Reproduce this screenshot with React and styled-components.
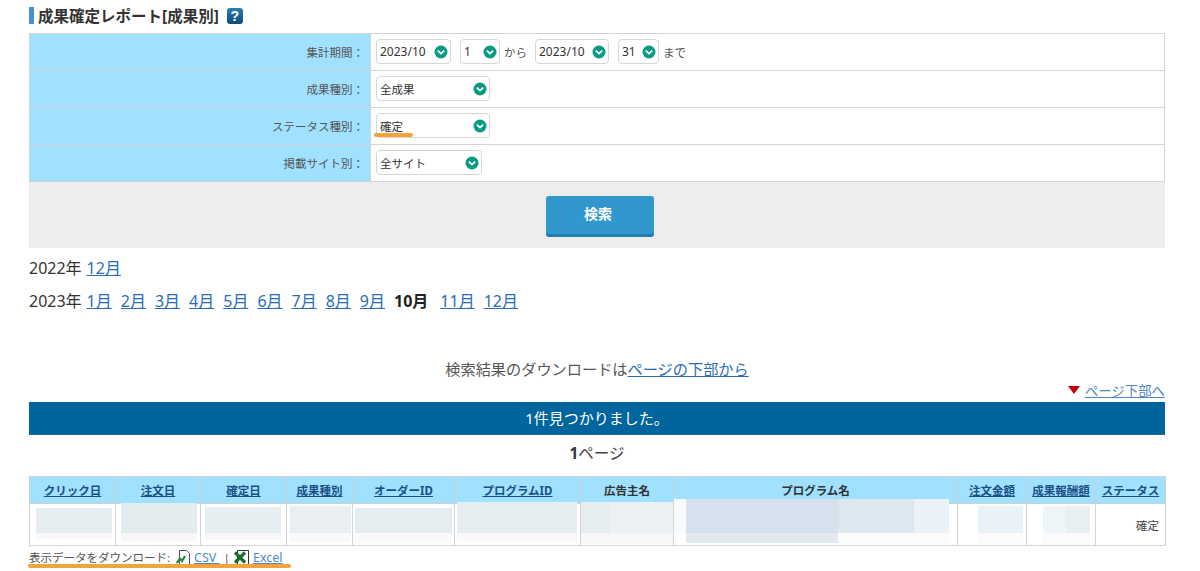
import React from "react";
import styled, { createGlobalStyle } from "styled-components";

const Global = createGlobalStyle`
  html, body { margin: 0; padding: 0; background: #fff; }
  body { font-family: "Noto Sans", "Noto Sans CJK JP", sans-serif; color: #333; overflow: hidden; }
`;

const Page = styled.div`
  width: 1136px;
  height: 571px;
  margin-left: 29px;
`;

const Title = styled.h1`
  display: flex;
  align-items: center;
  height: 17px;
  margin: 0;
  padding: 7px 0 0 9px;
  position: relative;
  font-size: 15.5px;
  font-weight: 700;
  color: #333;
  &::before {
    content: "";
    position: absolute;
    left: 0;
    top: 7px;
    width: 4.5px;
    height: 17px;
    background: #4a90d0;
  }
`;

const Help = styled.span`
  display: inline-flex;
  align-items: center;
  justify-content: center;
  width: 16px;
  height: 16px;
  margin-left: 8px;
  border-radius: 3px;
  background: linear-gradient(#2b80b4, #0b4a78);
  color: #fff;
  font-family: "Liberation Sans", sans-serif;
  font-size: 14px;
  font-weight: 700;
`;

const Form = styled.div`
  margin-top: 9px;
  border: 1px solid #d4d4d4;
  border-bottom: 0;
  display: flex;
  flex-direction: column;
`;

const FormRow = styled.div`
  display: flex;
  height: 36px;
  border-bottom: 1px solid #d4d4d4;
`;

const FormLabel = styled.div`
  box-sizing: border-box;
  width: 341px;
  background: #a0e1ff;
  border-right: 1px solid #d4d4d4;
  display: flex;
  align-items: center;
  justify-content: flex-end;
  padding-right: 6px;
  font-size: 11.5px;
  color: #555;
`;

const FormValue = styled.div`
  flex: 1;
  display: flex;
  align-items: center;
  padding: 0 0 1px 5px;
`;

const Select = styled.div`
  position: relative;
  display: flex;
  align-items: center;
  justify-content: space-between;
  box-sizing: border-box;
  width: ${(p) => p.$w}px;
  height: 25px;
  margin-right: ${(p) => p.$mr || 0}px;
  padding: 0 2px 0 3px;
  border: 1px solid #d6d6d6;
  border-radius: 4px;
  background: #fff;
  color: #333;
  font-size: ${(p) => p.$fs || 12}px;
`;

const Mark = styled.span`
  position: absolute;
  left: -3px;
  bottom: 0;
  width: 39px;
  height: 4px;
  border-radius: 2px;
  background: #f3a33c;
`;

const Unit = styled.span`
  margin-right: ${(p) => p.$mr || 0}px;
  font-size: 11.5px;
  color: #555;
`;

const Chevron = () => (
  <svg width="14" height="14" viewBox="0 0 14 14" style={{ flex: "none" }}>
    <circle cx="7" cy="7" r="6.5" fill="#0a9a82" />
    <path d="M3.8 5.6 7 8.6l3.2-3" fill="none" stroke="#fff" strokeWidth="1.7" />
  </svg>
);

const SearchBar = styled.div`
  height: 66px;
  background: #ededed;
  display: flex;
  align-items: center;
  justify-content: center;
`;

const SearchButton = styled.button`
  width: 108px;
  height: 41px;
  margin: 3px 0 0 6px;
  border: 0;
  border-bottom: 3px solid #1f7fb0;
  border-radius: 3px;
  background: #3198cd;
  color: #fff;
  font-family: inherit;
  font-size: 14px;
  font-weight: 700;
  padding: 0 4px 4px 0;
`;

const YearLine = styled.div`
  display: flex;
  align-items: center;
  height: 24px;
  margin-top: ${(p) => p.$mt}px;
  font-size: 16px;
  color: #333;
`;

const MonthLink = styled.a`
  margin-left: 5px;
  margin-right: 4px;
  color: #2a6db5;
  text-decoration: underline;
`;

const CurrentMonth = styled.b`
  margin-left: 5px;
  margin-right: 7px;
  color: #222;
`;

const Notice = styled.div`
  margin-top: 45px;
  height: 24px;
  text-align: center;
  font-size: 15.2px;
  color: #555;
  line-height: 24px;
  a { color: #2a6db5; text-decoration: underline; }
`;

const ToBottom = styled.div`
  display: flex;
  align-items: center;
  justify-content: flex-end;
  height: 20px;
  margin: -1px 0 2px;
  font-size: 13.4px;
  a { color: #4f86c6; text-decoration: underline; margin-left: 5px; }
`;

const Arrow = styled.span`
  width: 0;
  height: 0;
  border-left: 6px solid transparent;
  border-right: 6px solid transparent;
  border-top: 8px solid #c40000;
`;

const ResultBar = styled.div`
  height: 32px;
  background: #00659c;
  border-bottom: 1px solid #1d6f9c;
  color: #fff;
  font-size: 15px;
  line-height: 32px;
  text-align: center;
`;

const PageCount = styled.div`
  height: 24px;
  margin-top: 6px;
  line-height: 24px;
  text-align: center;
  font-size: 15.5px;
  color: #444;
  b { color: #333; }
`;

const Table = styled.table`
  margin-top: 11px;
  width: 1136px;
  table-layout: fixed;
  border-collapse: collapse;
`;

const Th = styled.th`
  height: 26px;
  padding: 0;
  background: #a0e1ff;
  border: 1px solid #d0d0d0;
  font-weight: 700;
  font-size: 11.5px;
  color: #333;
  a { color: #1c4f86; text-decoration: underline; }
`;

const Td = styled.td`
  position: relative;
  height: 41px;
  padding: 0 6px 0 0;
  border: 1px solid #d4d4d4;
  text-align: right;
  color: #444;
  font-size: 11.5px;
`;

const Patch = styled.span`
  position: absolute;
  left: ${(p) => p.$x}px;
  top: ${(p) => p.$y}px;
  width: ${(p) => p.$w}px;
  height: ${(p) => p.$h}px;
  background: ${(p) => p.$c};
`;

const Download = styled.div`
  position: relative;
  display: flex;
  align-items: center;
  height: 20px;
  margin-top: 1px;
  font-size: 11.5px;
  color: #555;
  a { color: #4f86c6; text-decoration: underline; font-size: 12.5px; }
`;

const DownloadMark = styled.span`
  position: absolute;
  left: -1px;
  top: 17px;
  width: 263px;
  height: 4px;
  border-radius: 2px;
  background: #f3a33c;
`;

const Sep = styled.span`
  margin: 0 4px;
`;

const CsvIcon = () => (
  <svg width="14" height="15" viewBox="0 0 14 15" style={{ margin: "0 4px 0 6px" }}>
    <path d="M3.5.5h7l3 3v11h-10z" fill="#fff" stroke="#555" />
    <path d="M.8 13 4 8.5l2 2.5 3-5" fill="none" stroke="#1e8a3c" strokeWidth="2.2" />
  </svg>
);

const ExcelIcon = () => (
  <svg width="15" height="15" viewBox="0 0 15 15" style={{ margin: "0 4px 0 0" }}>
    <path d="M3.5.5h11v14h-11z" fill="#fff" stroke="#333" />
    <path d="M1 2.5 11 12.5M11 2.5 1 12.5" stroke="#176d2e" strokeWidth="3.2" />
  </svg>
);

const cols = [
  ["クリック日", 86, true],
  ["注文日", 85, true],
  ["確定日", 86, true],
  ["成果種別", 66, true],
  ["オーダーID", 102, true],
  ["プログラムID", 126, true],
  ["広告主名", 93, false],
  ["プログラム名", 284, false],
  ["注文金額", 69, true],
  ["成果報酬額", 69, true],
  ["ステータス", 70, true],
];

const patches = [
  [[6, 4, 76, 25, "#e6edf0"], [6, 29, 76, 6, "#f6f8f9"]],
  [[5, -1, 76, 30, "#e5ecef"], [5, 29, 76, 8, "#f5f7f8"]],
  [[4, 3, 76, 26, "#e7eef1"], [4, 29, 76, 7, "#f6f8f9"]],
  [[3, 2, 61, 27, "#e8eef1"], [3, 29, 61, 9, "#f7f9fa"]],
  [[2, 4, 97, 25, "#e6edf0"], [2, 29, 97, 10, "#f9fafb"]],
  [[2, -2, 120, 31, "#e6edf1"], [2, 29, 120, 8, "#f8f9fa"]],
  [[0, -2, 29, 31, "#e6edf0"], [29, -2, 63, 31, "#ebf1f5"], [0, 29, 92, 11, "#f6f7f8"]],
  [[0, -5, 12, 34, "#f8fafb"], [12, -5, 152, 34, "#d5e2ee"], [164, -5, 76, 34, "#dce7ef"], [240, -5, 35, 34, "#eaf2f8"], [12, 29, 152, 10, "#e3e9f1"], [164, 29, 111, 10, "#fafbfc"]],
  [[20, 2, 45, 27, "#e9f2f7"], [20, 29, 45, 10, "#f9fbfc"]],
  [[16, 2, 23, 27, "#eef5f9"], [39, 2, 24, 27, "#e7eff2"], [16, 29, 47, 12, "#fafbfc"]],
];

const months = ["1月", "2月", "3月", "4月", "5月", "6月", "7月", "8月", "9月"];

export default function App() {
  return (
    <Page>
      <Global />
      <Title>
        成果確定レポート[成果別]<Help>?</Help>
      </Title>
      <Form>
        <FormRow>
          <FormLabel>集計期間：</FormLabel>
          <FormValue>
            <Select $w={75} $mr={9}>2023/10<Chevron /></Select>
            <Select $w={40} $mr={4}>1<Chevron /></Select>
            <Unit $mr={8}>から</Unit>
            <Select $w={74} $mr={9}>2023/10<Chevron /></Select>
            <Select $w={41} $mr={4}>31<Chevron /></Select>
            <Unit>まで</Unit>
          </FormValue>
        </FormRow>
        <FormRow>
          <FormLabel>成果種別：</FormLabel>
          <FormValue><Select $w={114} $fs={11.5}>全成果<Chevron /></Select></FormValue>
        </FormRow>
        <FormRow>
          <FormLabel>ステータス種別：</FormLabel>
          <FormValue><Select $w={114} $fs={11.5}>確定<Chevron /><Mark /></Select></FormValue>
        </FormRow>
        <FormRow>
          <FormLabel>掲載サイト別：</FormLabel>
          <FormValue><Select $w={106} $fs={11.5}>全サイト<Chevron /></Select></FormValue>
        </FormRow>
      </Form>
      <SearchBar><SearchButton>検索</SearchButton></SearchBar>
      <YearLine $mt={7}>2022年<MonthLink href="#">12月</MonthLink></YearLine>
      <YearLine $mt={9}>
        2023年
        {months.map((m) => <MonthLink key={m} href="#">{m}</MonthLink>)}
        <CurrentMonth>10月</CurrentMonth>
        <MonthLink href="#">11月</MonthLink>
        <MonthLink href="#">12月</MonthLink>
      </YearLine>
      <Notice>検索結果のダウンロードは<a href="#">ページの下部から</a></Notice>
      <ToBottom><Arrow /><a href="#">ページ下部へ</a></ToBottom>
      <ResultBar>1件見つかりました。</ResultBar>
      <PageCount><b>1</b>ページ</PageCount>
      <Table>
        <colgroup>
          {cols.map(([n, w]) => <col key={n} width={w} />)}
        </colgroup>
        <thead>
          <tr>
            {cols.map(([n, , link]) => <Th key={n}>{link ? <a href="#">{n}</a> : n}</Th>)}
          </tr>
        </thead>
        <tbody>
          <tr>
            {patches.map((group, i) => (
              <Td key={i}>
                {group.map(([x, y, w, h, c], j) => <Patch key={j} $x={x} $y={y} $w={w} $h={h} $c={c} />)}
              </Td>
            ))}
            <Td>確定</Td>
          </tr>
        </tbody>
      </Table>
      <Download>
        表示データをダウンロード:<CsvIcon /><a href="#">CSV&nbsp;</a><Sep>|</Sep><ExcelIcon /><a href="#">Excel</a>
        <DownloadMark />
      </Download>
    </Page>
  );
}
